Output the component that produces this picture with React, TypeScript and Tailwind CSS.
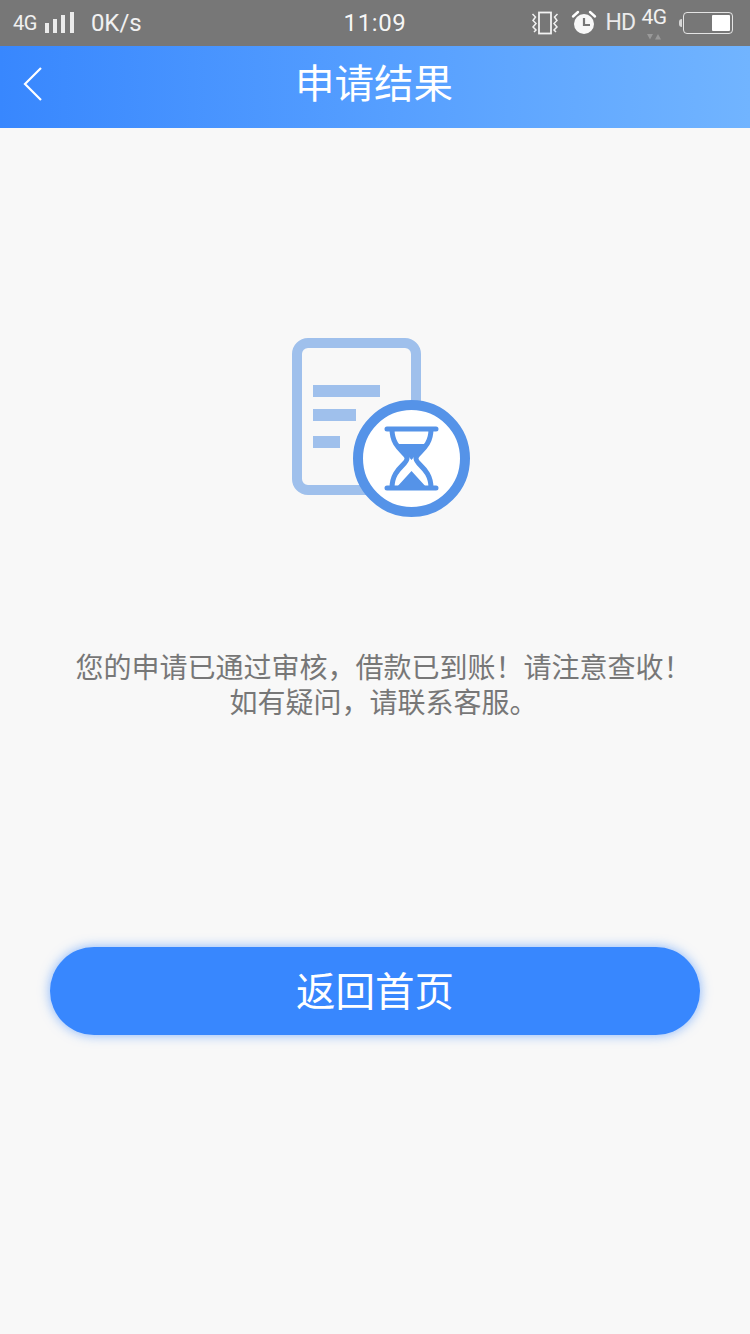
const cjk = "font-['Roboto','Noto_Sans_CJK_SC',sans-serif]";

function Signal() {
  return (
    <svg width="30" height="22" viewBox="0 0 30 22" className="ml-[8px] mt-[-1px]">
      <rect x="0" y="11" width="4" height="10" fill="#fff" fillOpacity="0.85" />
      <rect x="8" y="7" width="4" height="14" fill="#fff" fillOpacity="0.85" />
      <rect x="16" y="3" width="4" height="18" fill="#fff" fillOpacity="0.85" />
      <rect x="25" y="0" width="4" height="21" fill="#fff" fillOpacity="0.85" />
    </svg>
  );
}

function Vibrate() {
  return (
    <svg width="28" height="24" viewBox="0 0 28 24" fill="none" stroke="#fff" strokeWidth="1.8" strokeOpacity="0.9">
      <rect x="8" y="1.500" width="12" height="21" />
      <path d="M1.500 3l3 3-2.500 3.500 3 3-3 3.500 3 3-2 2" strokeWidth="1.500" />
      <path d="M26.500 3l-3 3 2.500 3.500-3 3 3 3.500-3 3 2 2" strokeWidth="1.500" />
    </svg>
  );
}

function Alarm() {
  return (
    <svg width="26" height="26" viewBox="0 0 26 26">
      <circle cx="13" cy="14" r="10" fill="#fff" fillOpacity="0.95" />
      <path d="M2 6.500 7 2M24 6.500 19 2" stroke="#fff" strokeWidth="2.400" strokeLinecap="round" />
      <path d="M13 8v7h6" fill="none" stroke="#777" strokeWidth="2.200" />
    </svg>
  );
}

function Net4G() {
  return (
    <div className="relative flex h-[34px] w-[28px] flex-col items-center">
      <span className="mt-[-2px] text-[21px] leading-[26px] tracking-[-0.5px] text-white/90">4G</span>
      <svg width="18" height="7" viewBox="0 0 18 7" className="absolute top-[27px]">
        <path d="M2 1h6L5 6.500zM10 6.500h6l-3-5.500z" fill="#999" />
      </svg>
    </div>
  );
}

function Battery() {
  return (
    <div className="ml-[11px] flex items-center">
      <span className="h-[8px] w-[3px] rounded-l-sm bg-white/70" />
      <div className="ml-[1px] flex h-[22px] w-[50px] justify-end rounded-[4px] border-[1.5px] border-white/80 p-[2px]">
        <div className="h-full w-[18px] rounded-[1px] bg-white" />
      </div>
    </div>
  );
}

function StatusBar() {
  return (
    <div className={`flex h-[46px] items-center justify-between bg-[#777777] pl-[13px] pr-[17px] ${cjk}`}>
      <div className="flex w-[209px] items-center text-white/90">
        <span className="text-[20px] tracking-[-0.5px]">4G</span>
        <Signal />
        <span className="ml-[16px] text-[24px]">0K/s</span>
      </div>
      <span className="text-[24px] tracking-[0.6px] text-white/95">11:09</span>
      <div className="flex w-[205px] items-center justify-end">
        <Vibrate />
        <div className="ml-[12px]"><Alarm /></div>
        <span className="ml-[8px] text-[23px] tracking-[-1px] text-white/85">HD</span>
        <div className="ml-[5px]"><Net4G /></div>
        <Battery />
      </div>
    </div>
  );
}

function NavBar() {
  return (
    <div className="relative flex h-[82px] items-center justify-center bg-gradient-to-r from-[#3887fe] to-[#71b4ff] pb-[4px] pr-[2px]">
      <svg width="20" height="36" viewBox="0 0 20 36" className="absolute left-[23px] top-[20px]">
        <path d="M18 2 2 18l16 16" fill="none" stroke="#fff" strokeWidth="2.200" />
      </svg>
      <span className={`text-[39.5px] leading-none text-white ${cjk}`}>申请结果</span>
    </div>
  );
}

function PendingIcon() {
  return (
    <svg width="178" height="180" viewBox="0 0 178 180">
      <rect x="5" y="5" width="119" height="147" rx="11" fill="none" stroke="#9fc0ec" strokeWidth="10" />
      <rect x="21" y="47" width="67" height="12" fill="#9fc0ec" />
      <rect x="21" y="71" width="43" height="12" fill="#9fc0ec" />
      <rect x="21" y="98" width="27" height="12" fill="#9fc0ec" />
      <circle cx="119.500" cy="120.500" r="53.500" fill="#fff" stroke="#5593e8" strokeWidth="10" />
      <path d="M95 91h49M95 150h49" stroke="#5593e8" strokeWidth="5" strokeLinecap="round" />
      <path d="M100 91c0 20 15 23 15 29.500s-15 10-15 29.500M139 91c0 20-15 23-15 29.500s15 10 15 29.500" fill="none" stroke="#5593e8" strokeWidth="5" />
      <path d="M103 106h33c-3 6-12 10-16.500 16-4.500-6-13.500-10-16.500-16zM104 150l15.500-17 15.500 17z" fill="#5593e8" />
    </svg>
  );
}

export default function App() {
  return (
    <div className="flex h-[1334px] w-[750px] flex-col bg-[#f8f8f8]">
      <StatusBar />
      <NavBar />
      <div className="flex flex-1 flex-col items-center">
        <div className="mt-[210px] pl-[12px]">
          <PendingIcon />
        </div>
        <p className={`mt-[133px] pl-[17px] text-center text-[28px] leading-[35px] text-[#777777] ${cjk}`}>
          您的申请已通过审核，借款已到账！请注意查收！
          <br />
          如有疑问，请联系客服。
        </p>
        <button
          className={`mt-[226px] h-[88px] w-[650px] rounded-full bg-[#3887fe] pt-[3px] text-[39.5px] text-white shadow-[0_0_12px_rgba(56,135,254,0.6)] ${cjk}`}
        >
          返回首页
        </button>
      </div>
    </div>
  );
}
